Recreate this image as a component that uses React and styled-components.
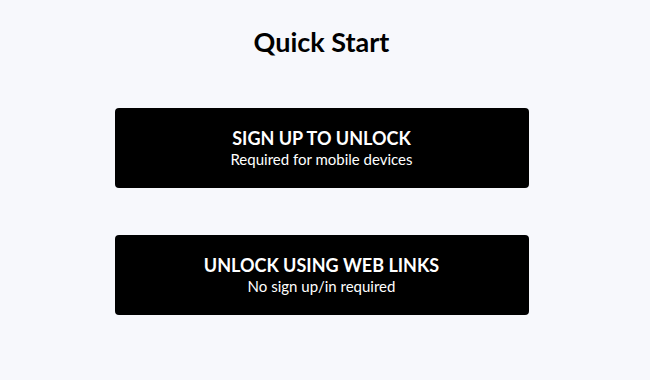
import styled, { createGlobalStyle } from 'styled-components';

const GlobalStyle = createGlobalStyle`
  html, body {
    margin: 0;
    padding: 0;
    background: #f7f8fc;
    font-family: Lato, "Open Sans", sans-serif;
  }
`;

const Page = styled.div`
  min-height: 380px;
  box-sizing: border-box;
  padding: 25px 7px 0 0;
  display: flex;
  flex-direction: column;
  align-items: center;
`;

const Title = styled.h1`
  margin: 0 0 49px;
  font-size: 27px;
  line-height: 34px;
  font-weight: 700;
  color: #000;
`;

const Options = styled.div`
  display: flex;
  flex-direction: column;
  gap: 47px;
  width: 414px;
`;

const OptionButton = styled.button`
  height: 80px;
  border: none;
  border-radius: 4px;
  background: #000;
  color: #fff;
  font-family: inherit;
  display: flex;
  flex-direction: column;
  align-items: center;
  justify-content: center;
  gap: 1px;
  cursor: pointer;
`;

const Label = styled.span`
  font-size: 18px;
  line-height: 22px;
  font-weight: 700;
`;

const Hint = styled.span`
  font-size: 15px;
  line-height: 19px;
  font-weight: 400;
`;

const options = [
  { label: 'SIGN UP TO UNLOCK', hint: 'Required for mobile devices' },
  { label: 'UNLOCK USING WEB LINKS', hint: 'No sign up/in required' },
];

export default function App() {
  return (
    <>
      <GlobalStyle />
      <Page>
        <Title>Quick Start</Title>
        <Options>
          {options.map((o) => (
            <OptionButton key={o.label}>
              <Label>{o.label}</Label>
              <Hint>{o.hint}</Hint>
            </OptionButton>
          ))}
        </Options>
      </Page>
    </>
  );
}
